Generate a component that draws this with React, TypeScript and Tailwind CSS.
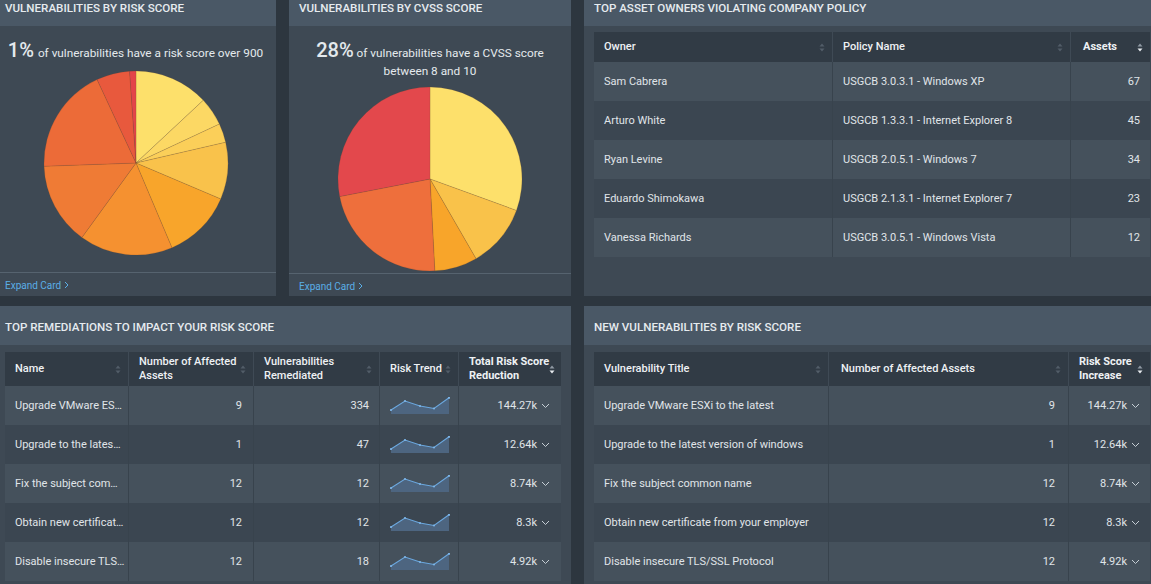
import React from "react";

type Slice = { end: number; color: string };

function arcPath(cx: number, cy: number, r: number, a0: number, a1: number) {
  const t = (a: number) => (a * Math.PI) / 180;
  const x0 = cx + r * Math.sin(t(a0));
  const y0 = cy - r * Math.cos(t(a0));
  const x1 = cx + r * Math.sin(t(a1));
  const y1 = cy - r * Math.cos(t(a1));
  const large = a1 - a0 > 180 ? 1 : 0;
  return `M${cx} ${cy} L${x0.toFixed(2)} ${y0.toFixed(2)} A${r} ${r} 0 ${large} 1 ${x1.toFixed(2)} ${y1.toFixed(2)} Z`;
}

function Pie({ slices }: { slices: Slice[] }) {
  let start = 0;
  return (
    <svg width="188" height="188" viewBox="0 0 188 188">
      {slices.map((s, i) => {
        const d = arcPath(94, 94, 92, start, s.end);
        start = s.end;
        return <path key={i} d={d} fill={s.color} stroke="rgba(110,70,40,0.35)" strokeWidth="0.5" />;
      })}
    </svg>
  );
}

const pie1: Slice[] = [
  { end: 47, color: "#fde06b" },
  { end: 65, color: "#fcd864" },
  { end: 77, color: "#fbcf59" },
  { end: 113, color: "#f9c24b" },
  { end: 157, color: "#f8a52b" },
  { end: 216, color: "#f59130" },
  { end: 268, color: "#ef7b35" },
  { end: 335, color: "#ec6b38" },
  { end: 356, color: "#e8593d" },
  { end: 360, color: "#e34549" },
];

const pie2: Slice[] = [
  { end: 110, color: "#fde06b" },
  { end: 150, color: "#f9c24a" },
  { end: 177, color: "#f8a52a" },
  { end: 259, color: "#ee6f3c" },
  { end: 360, color: "#e3484c" },
];

function SortIcon({ active }: { active?: boolean }) {
  return (
    <svg width="6" height="9" viewBox="0 0 6 9" className="shrink-0">
      <path d="M3 0.5 L5.5 3.5 L0.5 3.5 Z" fill={active ? "#8f99a3" : "#525d68"} />
      <path d="M3 8.5 L5.5 5.5 L0.5 5.5 Z" fill={active ? "#e8ecef" : "#525d68"} />
    </svg>
  );
}

function Chevron() {
  return (
    <svg width="9" height="6" viewBox="0 0 9 6" className="shrink-0">
      <path d="M1 1 L4.5 4.5 L8 1" fill="none" stroke="#c6ced5" strokeWidth="1" />
    </svg>
  );
}

function Spark() {
  const pts: [number, number][] = [
    [1, 13],
    [15, 4],
    [30, 9],
    [44, 11.5],
    [59, 0.8],
  ];
  const line = pts.map((p) => p.join(",")).join(" ");
  return (
    <svg width="60" height="18" viewBox="0 0 60 18">
      <polygon points={`1,17 ${line} 59,17`} fill="#4d6580" />
      <polyline points={line} fill="none" stroke="#6ba8df" strokeWidth="1.1" />
      {pts.map((p, i) => (
        <circle key={i} cx={p[0]} cy={p[1]} r="1.1" fill="#7db4e6" />
      ))}
    </svg>
  );
}

function CardHeader({ title }: { title: string }) {
  return (
    <div className="h-[39px] shrink-0 bg-[#4a5866] px-[10px] pt-[14px] text-[11.6px] font-medium uppercase leading-[14px] text-[#e6ebef]">
      {title}
    </div>
  );
}

function ExpandFooter() {
  return (
    <div className="flex h-[24px] shrink-0 items-center gap-[3px] border-t border-[#56636f] px-[10px] pt-[1px] text-[10px] text-[#5aaee6]">
      <span>Expand Card</span>
      <svg width="5" height="8" viewBox="0 0 5 8">
        <path d="M1 1 L4 4 L1 7" fill="none" stroke="#5aaee6" strokeWidth="1" />
      </svg>
    </div>
  );
}

const rowBg = (i: number) => (i % 2 === 0 ? "bg-[#45515c]" : "bg-[#3b4651]");

function HeadCell({ w, children, active, last }: { w: string; children: React.ReactNode; active?: boolean; last?: boolean }) {
  return (
    <div
      className={`${w} flex h-full items-center justify-between pl-[10px] pr-[7px] ${last ? "" : "border-r border-[#3f4a55]"}`}
    >
      <span className="whitespace-nowrap leading-[14px]">{children}</span>
      <SortIcon active={active} />
    </div>
  );
}

function App() {
  const owners = [
    ["Sam Cabrera", "USGCB 3.0.3.1 - Windows XP", "67"],
    ["Arturo White", "USGCB 1.3.3.1 - Internet Explorer 8", "45"],
    ["Ryan Levine", "USGCB 2.0.5.1 - Windows 7", "34"],
    ["Eduardo Shimokawa", "USGCB 2.1.3.1 - Internet Explorer 7", "23"],
    ["Vanessa Richards", "USGCB 3.0.5.1 - Windows Vista", "12"],
  ];
  const rem = [
    ["Upgrade VMware ES…", "9", "334", "144.27k"],
    ["Upgrade to the lates…", "1", "47", "12.64k"],
    ["Fix the subject com…", "12", "12", "8.74k"],
    ["Obtain new certificat…", "12", "12", "8.3k"],
    ["Disable insecure TLS…", "12", "18", "4.92k"],
  ];
  const vulns = [
    ["Upgrade VMware ESXi to the latest", "9", "144.27k"],
    ["Upgrade to the latest version of windows", "1", "12.64k"],
    ["Fix the subject common name", "12", "8.74k"],
    ["Obtain new certificate from your employer", "12", "8.3k"],
    ["Disable insecure TLS/SSL Protocol", "12", "4.92k"],
  ];
  const cellSep = "border-r border-[#38434d]";

  return (
    <div className="h-[584px] w-[1151px] overflow-hidden bg-[#2d363f] font-[Roboto,'Noto_Sans',sans-serif] text-[#e0e5e9]">
      <div className="-ml-[5px] -mt-[13px] flex w-[1165px] flex-col gap-[10px]">
        {/* top row */}
        <div className="flex h-[309px] gap-[13px]">
          {/* card 1 */}
          <div className="flex w-[281px] flex-col bg-[#3e4954]">
            <CardHeader title="Vulnerabilities by Risk Score" />
            <div className="flex flex-1 flex-col items-center">
              <div className="pt-[12px] text-center leading-[24px] text-[#e4e9ed]">
                <span className="text-[20px] font-medium">1%</span>{" "}
                <span className="text-[11.8px]">of vulnerabilities have a risk score over 900</span>
              </div>
              <div className="mt-[4px]">
                <Pie slices={pie1} />
              </div>
            </div>
            <ExpandFooter />
          </div>
          {/* card 2 */}
          <div className="flex w-[282px] flex-col bg-[#3e4954]">
            <CardHeader title="Vulnerabilities by CVSS Score" />
            <div className="flex flex-1 flex-col items-center">
              <div className="px-[20px] pt-[15px] text-center text-[11.8px] leading-[18px] text-[#e4e9ed]">
                <span className="text-[20px] font-medium leading-[18px]">28%</span> of vulnerabilities have a CVSS score between 8 and 10
              </div>
              <div className="mt-[5px]">
                <Pie slices={pie2} />
              </div>
            </div>
            <ExpandFooter />
          </div>
          {/* card 3 */}
          <div className="flex w-[576px] flex-col bg-[#3e4954]">
            <CardHeader title="Top Asset Owners Violating Company Policy" />
            <div className="mt-[6px] px-[10px] text-[11px]">
              <div className="flex h-[30px] items-center bg-[#313b45] font-medium text-[#eef1f4]">
                <HeadCell w="w-[239px]">Owner</HeadCell>
                <HeadCell w="w-[238px]">Policy Name</HeadCell>
                <HeadCell w="w-[79px]" active last>
                  <span className="pl-[2px] font-bold">Assets</span>
                </HeadCell>
              </div>
              {owners.map((r, i) => (
                <div key={i} className={`flex h-[39px] ${rowBg(i)}`}>
                  <div className={`flex w-[239px] items-center pl-[10px] pt-[1px] ${cellSep}`}>{r[0]}</div>
                  <div className={`flex w-[238px] items-center pl-[10px] pt-[1px] ${cellSep}`}>{r[1]}</div>
                  <div className="flex w-[79px] items-center justify-end pr-[10px] pt-[1px]">{r[2]}</div>
                </div>
              ))}
            </div>
          </div>
        </div>

        {/* bottom row */}
        <div className="flex h-[300px] gap-[13px]">
          {/* card 4 */}
          <div className="flex w-[576px] flex-col bg-[#3e4954]">
            <CardHeader title="Top Remediations to Impact Your Risk Score" />
            <div className="mt-[7px] px-[10px] text-[11px]">
              <div className="flex h-[34px] items-center bg-[#313b45] font-medium text-[#eef1f4]">
                <HeadCell w="w-[124px]">Name</HeadCell>
                <HeadCell w="w-[125px]">
                  Number of Affected
                  <br />
                  Assets
                </HeadCell>
                <HeadCell w="w-[126px]">
                  Vulnerabilities
                  <br />
                  Remediated
                </HeadCell>
                <HeadCell w="w-[79px]">Risk Trend</HeadCell>
                <HeadCell w="w-[102px]" active last>
                  <span className="font-bold">
                    Total Risk Score
                    <br />
                    Reduction
                  </span>
                </HeadCell>
              </div>
              {rem.map((r, i) => (
                <div key={i} className={`flex h-[39px] ${rowBg(i)}`}>
                  <div className={`flex w-[124px] items-center overflow-hidden whitespace-nowrap pl-[10px] pt-[1px] ${cellSep}`}>{r[0]}</div>
                  <div className={`flex w-[125px] items-center justify-end pr-[11px] pt-[1px] ${cellSep}`}>{r[1]}</div>
                  <div className={`flex w-[126px] items-center justify-end pr-[10px] pt-[1px] ${cellSep}`}>{r[2]}</div>
                  <div className={`flex w-[79px] items-center pl-[10px] ${cellSep}`}>
                    <Spark />
                  </div>
                  <div className="flex w-[102px] items-center justify-end gap-[4px] pr-[11px] pt-[1px]">
                    <span>{r[3]}</span>
                    <Chevron />
                  </div>
                </div>
              ))}
            </div>
          </div>
          {/* card 5 */}
          <div className="flex w-[576px] flex-col bg-[#3e4954]">
            <CardHeader title="New Vulnerabilities by Risk Score" />
            <div className="mt-[7px] px-[10px] text-[11px]">
              <div className="flex h-[34px] items-center bg-[#313b45] font-medium text-[#eef1f4]">
                <HeadCell w="w-[235px]">Vulnerability Title</HeadCell>
                <HeadCell w="w-[240px]">
                  <span className="pl-[2px]">Number of Affected Assets</span>
                </HeadCell>
                <HeadCell w="w-[81px]" active last>
                  <span className="font-bold">
                    Risk Score
                    <br />
                    Increase
                  </span>
                </HeadCell>
              </div>
              {vulns.map((r, i) => (
                <div key={i} className={`flex h-[39px] ${rowBg(i)}`}>
                  <div className={`flex w-[235px] items-center pl-[10px] pt-[1px] ${cellSep}`}>{r[0]}</div>
                  <div className={`flex w-[240px] items-center justify-end pr-[13px] pt-[1px] ${cellSep}`}>{r[1]}</div>
                  <div className="flex w-[81px] items-center justify-end gap-[4px] pr-[10px] pt-[1px]">
                    <span>{r[2]}</span>
                    <Chevron />
                  </div>
                </div>
              ))}
            </div>
          </div>
        </div>
      </div>
    </div>
  );
}

export default App;
